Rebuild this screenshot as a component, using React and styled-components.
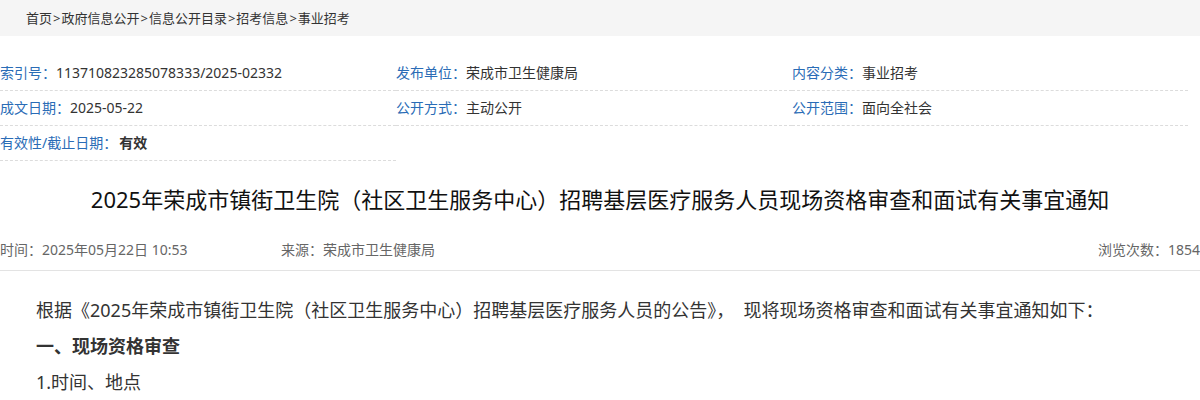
import React from "react";
import styled, { createGlobalStyle } from "styled-components";

const Global = createGlobalStyle`
  html, body { margin: 0; padding: 0; background: #fff; }
  body {
    font-family: "Noto Sans", "Noto Sans CJK SC", sans-serif;
    color: #333;
  }
`;

const Page = styled.div`
  width: 1200px;
  overflow: hidden;
`;

const Breadcrumb = styled.nav`
  height: 36px;
  line-height: 36px;
  background: #f5f5f5;
  padding-left: 26px;
  font-size: 13px;
  color: #333;
  display: flex;
`;

const Crumb = styled.span``;

const Sep = styled.span`
  margin: 0 1px;
`;

const MetaGrid = styled.div`
  margin-top: 20px;
  display: flex;
  flex-wrap: wrap;
`;

const MetaCell = styled.div`
  width: 396px;
  height: 34px;
  line-height: 34px;
  border-bottom: 1px dashed #dcdcdc;
  font-size: 14px;
  white-space: nowrap;
  overflow: hidden;
`;

const Label = styled.span`
  color: #2a6cb6;
`;

const Value = styled.span`
  color: #333;
  font-weight: ${(p) => (p.$bold ? 700 : 400)};
  margin-left: ${(p) => (p.$bold ? "2px" : "0")};
`;

const Title = styled.h1`
  margin: 23px 0 0;
  font-size: 22px;
  line-height: 30px;
  font-weight: 400;
  color: #111;
  text-align: center;
`;

const InfoBar = styled.div`
  margin-top: 16px;
  height: 40px;
  line-height: 40px;
  border-bottom: 1px solid #e3e3e3;
  font-size: 14px;
  color: #666;
  display: flex;
`;

const InfoItem = styled.span`
  width: ${(p) => p.$w || "auto"};
  margin-left: ${(p) => (p.$right ? "auto" : "0")};
`;

const Body = styled.div`
  padding-top: 21px;
  font-size: 18px;
  line-height: 36px;
  color: #333;
`;

const P = styled.p`
  margin: 0;
  text-indent: 2em;
  font-weight: ${(p) => (p.$bold ? 700 : 400)};
  white-space: pre;
`;

const crumbs = ["首页", "政府信息公开", "信息公开目录", "招考信息", "事业招考"];

const meta = [
  { label: "索引号：", value: "113710823285078333/2025-02332" },
  { label: "发布单位：", value: "荣成市卫生健康局" },
  { label: "内容分类：", value: "事业招考" },
  { label: "成文日期：", value: "2025-05-22" },
  { label: "公开方式：", value: "主动公开" },
  { label: "公开范围：", value: "面向全社会" },
  { label: "有效性/截止日期：", value: "有效", bold: true },
];

export default function App() {
  return (
    <Page>
      <Global />
      <Breadcrumb>
        {crumbs.map((c, i) => (
          <React.Fragment key={c}>
            {i > 0 && <Sep>&gt;</Sep>}
            <Crumb>{c}</Crumb>
          </React.Fragment>
        ))}
      </Breadcrumb>
      <MetaGrid>
        {meta.map((m) => (
          <MetaCell key={m.label}>
            <Label>{m.label}</Label>
            <Value $bold={m.bold}>{m.value}</Value>
          </MetaCell>
        ))}
      </MetaGrid>
      <Title>
        2025年荣成市镇街卫生院（社区卫生服务中心）招聘基层医疗服务人员现场资格审查和面试有关事宜通知
      </Title>
      <InfoBar>
        <InfoItem $w="281px">时间：2025年05月22日 10:53</InfoItem>
        <InfoItem>来源：荣成市卫生健康局</InfoItem>
        <InfoItem $right>浏览次数：1854</InfoItem>
      </InfoBar>
      <Body>
        <P>{"根据《2025年荣成市镇街卫生院（社区卫生服务中心）招聘基层医疗服务人员的公告》，  现将现场资格审查和面试有关事宜通知如下："}</P>
        <P $bold>一、现场资格审查</P>
        <P>1.时间、地点</P>
      </Body>
    </Page>
  );
}
